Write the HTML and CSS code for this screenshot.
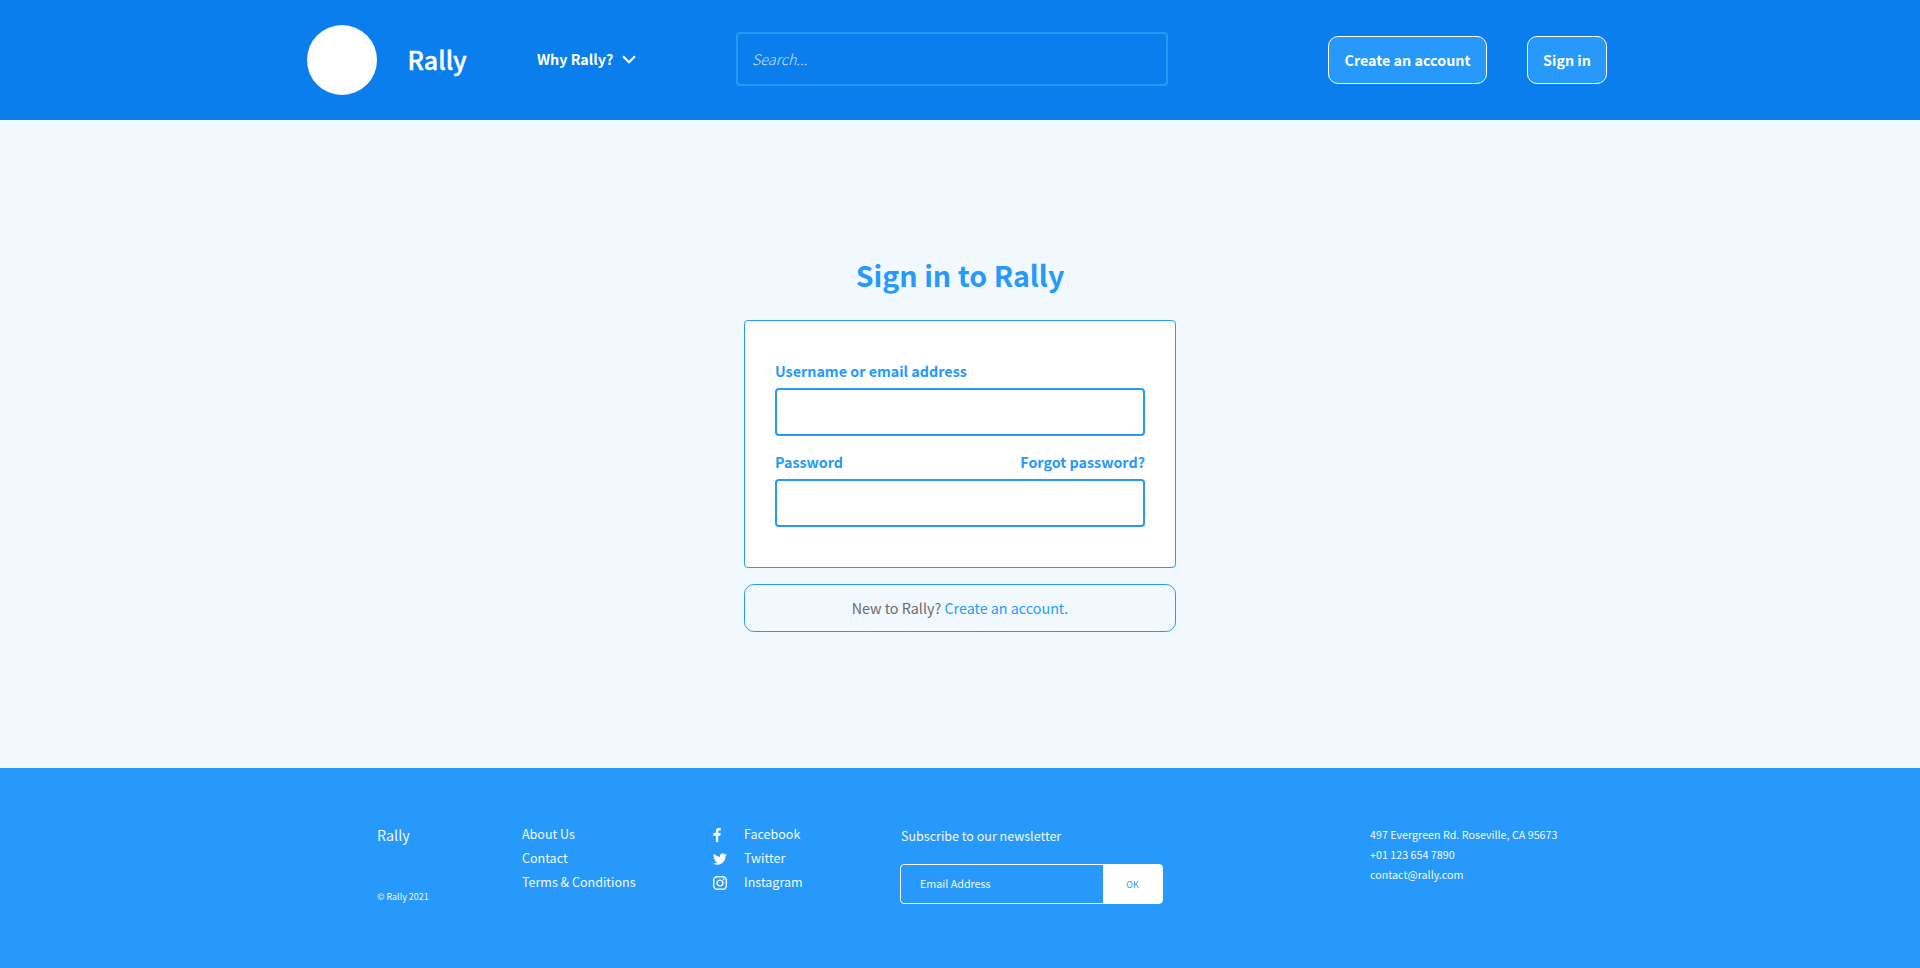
FILE: index.html
```html
<!DOCTYPE html>
<html lang="en">
<head>
<meta charset="utf-8">
<title>Sign in to Rally</title>
<link rel="stylesheet" href="styles.css">
</head>
<body>
<header class="header">
  <span class="logo"></span>
  <span class="brand">Rally</span>
  <a class="menu"><span>Why Rally?</span>
    <svg class="chevron" viewBox="0 0 14 9"><path d="M1 1.2 7 7.3 13 1.2"/></svg></a>
  <div class="search"><span>Search...</span></div>
  <nav class="actions"><a class="button create">Create an account</a><a class="button signin">Sign in</a></nav>
</header>
<main class="main">
  <h1 class="title">Sign in to Rally</h1>
  <form class="card">
    <div class="row"><label>Username or email address</label></div>
    <input class="field" type="text">
    <div class="row"><label>Password</label><a>Forgot password?</a></div>
    <input class="field" type="password">
  </form>
  <p class="signup">New to Rally?&nbsp;<a>Create an account.</a></p>
</main>
<footer class="footer">
  <div class="about"><span>Rally</span><small>© Rally 2021</small></div>
  <ul class="links"><li>About Us</li><li>Contact</li><li>Terms &amp; Conditions</li></ul>
  <ul class="links social">
    <li><svg viewBox="0 0 14 14"><path d="M2.900 14V7.800H.3V5.100h2.600V3.200C2.900 1.100 4.100 0 5.900 0c.9 0 1.600.1 1.800.1v2.300H6.400c-1 0-1.200.6-1.200 1.300v1.400h2.500l-.4 2.700H5.200V14z"/></svg>Facebook</li>
    <li><svg viewBox="0 0 24 24"><path d="M24 4.600a10 10 0 0 1-2.800.8 5 5 0 0 0 2.100-2.700 9.800 9.800 0 0 1-3.100 1.200 4.900 4.900 0 0 0-8.400 4.500A14 14 0 0 1 1.700 3.100a4.900 4.900 0 0 0 1.500 6.600 4.900 4.900 0 0 1-2.200-.6v.1a4.900 4.900 0 0 0 3.900 4.800 5 5 0 0 1-2.200.1 4.900 4.900 0 0 0 4.600 3.400A9.900 9.900 0 0 1 0 19.500 14 14 0 0 0 7.500 21.700c9.100 0 14-7.500 14-14v-.6A10 10 0 0 0 24 4.600z"/></svg>Twitter</li>
    <li><svg class="outline" viewBox="0 0 14 14"><rect x=".7" y=".7" width="12.600" height="12.600" rx="3.500"/><circle cx="7" cy="7" r="2.900"/><circle class="dot" cx="10.700" cy="3.300" r=".9"/></svg>Instagram</li>
  </ul>
  <div class="newsletter"><span>Subscribe to our newsletter</span>
    <div class="subscribe"><span>Email Address</span><b>OK</b></div></div>
  <address class="address"><span>497 Evergreen Rd. Roseville, CA 95673</span><span>+01 123 654 7890</span><span>contact@rally.com</span></address>
</footer>
</body>
</html>
```
FILE: styles.css
```css
* { box-sizing: border-box; }
body { margin: 0; height: 968px; display: flex; flex-direction: column; background: #f1f9ff; color: #fff;
  font: 14.320px/20px "Noto Sans CJK JP", "Noto Sans", sans-serif; }
.header { height: 120px; display: flex; align-items: center; padding: 0 313px 0 307px; background: #0a7eec; }
.logo { width: 70px; height: 70px; border-radius: 50%; background: #fff; }
.brand { width: 129.500px; margin-left: 30.500px; padding-bottom: 2px; font-size: 25.060px; line-height: 30px; font-weight: 500; -webkit-text-stroke: .4px #fff; }
.menu { width: 199px; display: flex; align-items: center; gap: 9px; padding-bottom: 2px; font-weight: 700; }
.chevron { width: 14px; height: 9px; fill: none; stroke: #fff; stroke-width: 2; }
.search { width: 432px; height: 54px; display: flex; align-items: center; margin-bottom: 2px; padding-left: 14px; border: 2px solid #2699fb; border-radius: 4px; color: #c8e6fe; font-size: 14.400px; font-style: italic; font-weight: 300; }
.actions { display: flex; gap: 40px; margin-left: auto; }
.button { height: 48px; line-height: 45px; border: 1px solid #fff; border-radius: 10px; background: #2699fb; font-weight: 700; text-align: center; }
.create { width: 159px; }
.signin { width: 80px; }
.main { flex: 1; display: flex; flex-direction: column; align-items: center; padding-top: 135px; color: #2699fb; }
.title { margin: 0; font-size: 28.640px; line-height: 40px; font-weight: 700; }
.card { width: 432px; height: 248px; margin-top: 25px; padding: 40px 30px 0; border: 1px solid #2699fb; border-radius: 4px; background: #fff; }
.row { display: flex; justify-content: space-between; height: 20px; font-weight: 700; }
.field { display: block; width: 370px; height: 48px; margin: 7px 0 16px; border: 2px solid #2699fb; border-radius: 4px; background: #fff; }
.signup { width: 432px; height: 48px; margin: 16px 0 0; display: flex; justify-content: center; align-items: center; border: 1px solid #2699fb; border-radius: 10px; color: #6b6b6b; }
.signup a { color: #2699fb; }
.footer { height: 200px; display: flex; padding: 56px 0 0 377px; background: #2699fb; color: #f1f9ff; }
.about { width: 145px; display: flex; flex-direction: column; gap: 43px; padding-top: 1px; }
.about small { font-size: 8.950px; line-height: 18px; }
.links { width: 191px; margin: -2px 0 0; padding: 0; list-style: none; font-size: 12.530px; line-height: 24px; }
.social { width: 187px; }
.social li { display: flex; align-items: center; gap: 17px; }
.social svg { width: 14px; height: 14px; margin-top: 1px; fill: #fff; }
.social .outline { fill: none; stroke: #fff; stroke-width: 1.400; }
.outline .dot { fill: #fff; stroke: none; }
.newsletter { width: 470px; padding-top: 2px; font-size: 12.530px; }
.newsletter > span { padding-left: 1px; }
.subscribe { width: 263px; height: 40px; margin-top: 18px; display: flex; justify-content: space-between; border: 1px solid #fff; border-radius: 4px; font-size: 10.740px; line-height: 37px; padding-left: 19px; }
.subscribe b { width: 59px; background: #fff; color: #2699fb; font-size: 8.950px; line-height: 39px; font-weight: 400; text-align: center; }
.address { padding-top: 1px; font-size: 10.740px; line-height: 20px; font-style: normal; display: flex; flex-direction: column; }
```
